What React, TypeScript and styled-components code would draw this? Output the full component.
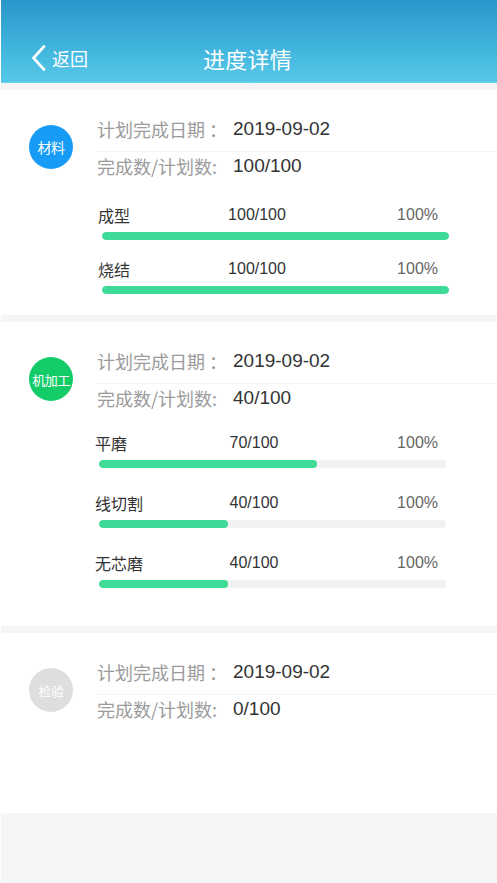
import React from "react";
import styled, { createGlobalStyle } from "styled-components";

const GlobalStyle = createGlobalStyle`
  html, body {
    margin: 0;
    padding: 0;
    background: #f5f5f5;
  }
  body {
    font-family: "Liberation Sans", "Noto Sans CJK SC", sans-serif;
    -webkit-font-smoothing: antialiased;
  }
  * { box-sizing: border-box; }
`;

const Page = styled.div`
  min-height: 883px;
  background: #f5f5f5;
  border-left: 1px solid #ffffff;
`;

const Header = styled.header`
  height: 83px;
  padding-top: 36px;
  background: linear-gradient(180deg, #2a97ca 0%, #3fb2dc 55%, #56c9e9 100%);
  border-bottom: 1px solid #66d3f0;
  color: #ffffff;
`;

const HeaderRow = styled.div`
  height: 44px;
  display: grid;
  grid-template-columns: 1fr auto 1fr;
  align-items: center;
`;

const BackButton = styled.button`
  justify-self: start;
  display: flex;
  align-items: center;
  gap: 5px;
  margin-left: 30px;
  padding: 0;
  border: none;
  background: none;
  color: #ffffff;
  font-family: "Noto Sans CJK SC", sans-serif;
  font-size: 18px;
  line-height: 24px;
  cursor: pointer;
`;

const Title = styled.h1`
  margin: 0 0 0 -3px;
  font-family: "Noto Sans CJK SC", sans-serif;
  font-weight: 400;
  font-size: 22px;
  line-height: 30px;
  letter-spacing: 0.3px;
`;

const Content = styled.main`
  padding-top: 7px;
  display: flex;
  flex-direction: column;
  gap: 7px;
`;

const Section = styled.section<{ $padBottom: number }>`
  background: #ffffff;
  padding: 24px 0 ${(p) => p.$padBottom}px 28px;
`;

const SectionTop = styled.div`
  display: flex;
  align-items: center;
  gap: 24px;
`;

const Badge = styled.div<{ $color: string; $size: number }>`
  flex: none;
  width: 44px;
  height: 44px;
  border-radius: 50%;
  background: ${(p) => p.$color};
  color: #ffffff;
  display: flex;
  align-items: center;
  justify-content: center;
  font-family: "Noto Sans CJK SC", sans-serif;
  font-size: ${(p) => p.$size}px;
  white-space: nowrap;
  letter-spacing: -0.5px;
`;

const InfoList = styled.div`
  flex: 1;
  display: flex;
  flex-direction: column;
`;

const InfoRow = styled.div<{ $first?: boolean }>`
  display: flex;
  align-items: center;
  height: ${(p) => (p.$first ? 38 : 28)}px;
  padding-bottom: ${(p) => (p.$first ? 8 : 0)}px;
  border-bottom: ${(p) => (p.$first ? "1px solid #f3f3f3" : "none")};
`;

const InfoLabel = styled.span`
  width: 136px;
  flex: none;
  color: #9b9b9b;
  font-size: 18px;
  line-height: 30px;
  white-space: nowrap;
  font-family: "Noto Sans CJK SC", sans-serif;
`;

const InfoValue = styled.span`
  color: #333333;
  font-size: 19px;
  line-height: 30px;
`;

const ProcessList = styled.div<{ $left: number; $top: number; $gap: number }>`
  width: 347px;
  margin-left: ${(p) => p.$left}px;
  margin-top: ${(p) => p.$top}px;
  display: flex;
  flex-direction: column;
  gap: ${(p) => p.$gap}px;
`;

const ProcessItem = styled.div<{ $inner: number }>`
  display: flex;
  flex-direction: column;
  gap: ${(p) => p.$inner}px;
`;

const ProcessHead = styled.div`
  display: grid;
  grid-template-columns: 120px 70px 1fr;
  align-items: center;
  height: 24px;
  font-size: 16px;
  line-height: 24px;
`;

const ProcessName = styled.span`
  margin-left: -4px;
  color: #333333;
  font-family: "Noto Sans CJK SC", sans-serif;
  white-space: nowrap;
`;

const ProcessCount = styled.span`
  color: #333333;
  text-align: center;
  white-space: nowrap;
`;

const ProcessPercent = styled.span<{ $right: number }>`
  color: #666666;
  text-align: right;
  padding-right: ${(p) => p.$right}px;
`;

const Track = styled.div`
  height: 8px;
  border-radius: 4px;
  background: #f2f2f2;
  overflow: hidden;
`;

const Fill = styled.div`
  height: 100%;
  border-radius: 4px;
  background: #3ddb97;
`;

type Proc = { name: string; count: string; percent: string; fill: number };
type Stage = {
  badge: string;
  color: string;
  badgeSize: number;
  date: string;
  count: string;
  procs: Proc[];
  left: number;
  top: number;
  gap: number;
  inner: number;
  right: number;
  padBottom: number;
};

const stages: Stage[] = [
  {
    badge: "材料",
    color: "#179cf6",
    badgeSize: 14,
    date: "2019-09-02",
    count: "100/100",
    procs: [
      { name: "成型", count: "100/100", percent: "100%", fill: 100 },
      { name: "烧结", count: "100/100", percent: "100%", fill: 100 },
    ],
    left: 5,
    top: 23,
    gap: 17,
    inner: 5,
    right: 11,
    padBottom: 21,
  },
  {
    badge: "机加工",
    color: "#13cc68",
    badgeSize: 13,
    date: "2019-09-02",
    count: "40/100",
    procs: [
      { name: "平磨", count: "70/100", percent: "100%", fill: 62.8 },
      { name: "线切割", count: "40/100", percent: "100%", fill: 37.2 },
      { name: "无芯磨", count: "40/100", percent: "100%", fill: 37.2 },
    ],
    left: 2,
    top: 19,
    gap: 23,
    inner: 5,
    right: 8,
    padBottom: 38,
  },
  {
    badge: "检验",
    color: "#dedede",
    badgeSize: 13,
    date: "2019-09-02",
    count: "0/100",
    procs: [],
    left: 0,
    top: 0,
    gap: 0,
    inner: 0,
    right: 0,
    padBottom: 90,
  },
];

const ChevronLeft = () => (
  <svg width="16" height="26" viewBox="0 0 16 26" fill="none">
    <path d="M13 1.5 L2.5 13 L13 24.5" stroke="#ffffff" strokeWidth="2.6" strokeLinecap="round" strokeLinejoin="round" />
  </svg>
);

export default function App() {
  return (
    <>
      <GlobalStyle />
      <Page>
        <Header>
          <HeaderRow>
            <BackButton>
              <ChevronLeft />
              返回
            </BackButton>
            <Title>进度详情</Title>
            <span />
          </HeaderRow>
        </Header>
        <Content>
          {stages.map((s) => (
            <Section key={s.badge} $padBottom={s.padBottom}>
              <SectionTop>
                <Badge $color={s.color} $size={s.badgeSize}>
                  {s.badge}
                </Badge>
                <InfoList>
                  <InfoRow $first>
                    <InfoLabel>计划完成日期 ：</InfoLabel>
                    <InfoValue>{s.date}</InfoValue>
                  </InfoRow>
                  <InfoRow>
                    <InfoLabel>完成数/计划数:</InfoLabel>
                    <InfoValue>{s.count}</InfoValue>
                  </InfoRow>
                </InfoList>
              </SectionTop>
              {s.procs.length > 0 && (
                <ProcessList $left={68 + s.left} $top={s.top} $gap={s.gap}>
                  {s.procs.map((p) => (
                    <ProcessItem key={p.name} $inner={s.inner}>
                      <ProcessHead>
                        <ProcessName>{p.name}</ProcessName>
                        <ProcessCount>{p.count}</ProcessCount>
                        <ProcessPercent $right={s.right}>{p.percent}</ProcessPercent>
                      </ProcessHead>
                      <Track>
                        <Fill style={{ width: `${p.fill}%` }} />
                      </Track>
                    </ProcessItem>
                  ))}
                </ProcessList>
              )}
            </Section>
          ))}
        </Content>
      </Page>
    </>
  );
}
